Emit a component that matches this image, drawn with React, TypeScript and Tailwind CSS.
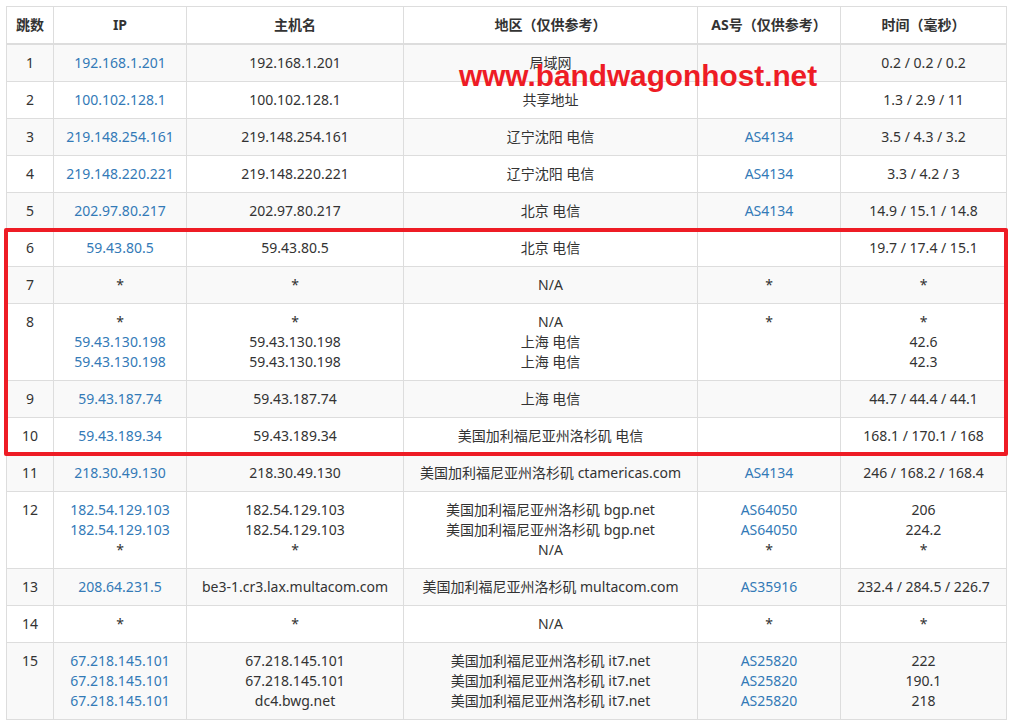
import React from "react";

type Row = {
  hop: string;
  ip: string[];
  host: string[];
  region: string[];
  as: string[];
  time: string[];
};

const rows: Row[] = [
  { hop: "1", ip: ["192.168.1.201"], host: ["192.168.1.201"], region: ["局域网"], as: [""], time: ["0.2 / 0.2 / 0.2"] },
  { hop: "2", ip: ["100.102.128.1"], host: ["100.102.128.1"], region: ["共享地址"], as: [""], time: ["1.3 / 2.9 / 11"] },
  { hop: "3", ip: ["219.148.254.161"], host: ["219.148.254.161"], region: ["辽宁沈阳 电信"], as: ["AS4134"], time: ["3.5 / 4.3 / 3.2"] },
  { hop: "4", ip: ["219.148.220.221"], host: ["219.148.220.221"], region: ["辽宁沈阳 电信"], as: ["AS4134"], time: ["3.3 / 4.2 / 3"] },
  { hop: "5", ip: ["202.97.80.217"], host: ["202.97.80.217"], region: ["北京 电信"], as: ["AS4134"], time: ["14.9 / 15.1 / 14.8"] },
  { hop: "6", ip: ["59.43.80.5"], host: ["59.43.80.5"], region: ["北京 电信"], as: [""], time: ["19.7 / 17.4 / 15.1"] },
  { hop: "7", ip: ["*"], host: ["*"], region: ["N/A"], as: ["*"], time: ["*"] },
  {
    hop: "8",
    ip: ["*", "59.43.130.198", "59.43.130.198"],
    host: ["*", "59.43.130.198", "59.43.130.198"],
    region: ["N/A", "上海 电信", "上海 电信"],
    as: ["*", "", ""],
    time: ["*", "42.6", "42.3"],
  },
  { hop: "9", ip: ["59.43.187.74"], host: ["59.43.187.74"], region: ["上海 电信"], as: [""], time: ["44.7 / 44.4 / 44.1"] },
  { hop: "10", ip: ["59.43.189.34"], host: ["59.43.189.34"], region: ["美国加利福尼亚州洛杉矶 电信"], as: [""], time: ["168.1 / 170.1 / 168"] },
  { hop: "11", ip: ["218.30.49.130"], host: ["218.30.49.130"], region: ["美国加利福尼亚州洛杉矶 ctamericas.com"], as: ["AS4134"], time: ["246 / 168.2 / 168.4"] },
  {
    hop: "12",
    ip: ["182.54.129.103", "182.54.129.103", "*"],
    host: ["182.54.129.103", "182.54.129.103", "*"],
    region: ["美国加利福尼亚州洛杉矶 bgp.net", "美国加利福尼亚州洛杉矶 bgp.net", "N/A"],
    as: ["AS64050", "AS64050", "*"],
    time: ["206", "224.2", "*"],
  },
  { hop: "13", ip: ["208.64.231.5"], host: ["be3-1.cr3.lax.multacom.com"], region: ["美国加利福尼亚州洛杉矶 multacom.com"], as: ["AS35916"], time: ["232.4 / 284.5 / 226.7"] },
  { hop: "14", ip: ["*"], host: ["*"], region: ["N/A"], as: ["*"], time: ["*"] },
  {
    hop: "15",
    ip: ["67.218.145.101", "67.218.145.101", "67.218.145.101"],
    host: ["67.218.145.101", "67.218.145.101", "dc4.bwg.net"],
    region: ["美国加利福尼亚州洛杉矶 it7.net", "美国加利福尼亚州洛杉矶 it7.net", "美国加利福尼亚州洛杉矶 it7.net"],
    as: ["AS25820", "AS25820", "AS25820"],
    time: ["222", "190.1", "218"],
  },
];

function Lines({ items, link }: { items: string[]; link?: boolean }) {
  return (
    <>
      {items.map((t, i) => (
        <div
          key={i}
          className={
            "h-5 " + (link && t !== "*" ? "text-[#337ab7]" : "text-[#333333]")
          }
        >
          {t}
        </div>
      ))}
    </>
  );
}

const td = "border border-[#dddddd] px-2 py-2 text-center align-top leading-5";
const th = "border border-[#dddddd] border-b-2 px-2 py-2 text-center align-bottom leading-5 font-bold text-[#333333]";

export default function App() {
  return (
    <div
      className="relative bg-white w-[1013px] min-h-[723px] pl-[6px] pt-[6px] text-[14px] text-[#333333]"
      style={{ fontFamily: '"Noto Sans", "Noto Sans CJK SC", sans-serif' }}
    >
      <table className="w-[1000px] table-fixed border-collapse border border-[#dddddd]">
        <colgroup>
          <col className="w-[47px]" />
          <col className="w-[133px]" />
          <col className="w-[217px]" />
          <col className="w-[294px]" />
          <col className="w-[143px]" />
          <col className="w-[166px]" />
        </colgroup>
        <thead>
          <tr>
            <th className={th}>跳数</th>
            <th className={th}>IP</th>
            <th className={th}>主机名</th>
            <th className={th}>地区（仅供参考）</th>
            <th className={th}>AS号（仅供参考）</th>
            <th className={th}>时间（毫秒）</th>
          </tr>
        </thead>
        <tbody>
          {rows.map((r, i) => (
            <tr key={r.hop} className={i % 2 === 0 ? "bg-[#f9f9f9]" : "bg-white"}>
              <td className={td}>
                <div className="h-5">{r.hop}</div>
              </td>
              <td className={td}>
                <Lines items={r.ip} link />
              </td>
              <td className={td}>
                <Lines items={r.host} />
              </td>
              <td className={td}>
                <Lines items={r.region} />
              </td>
              <td className={td}>
                <Lines items={r.as} link />
              </td>
              <td className={td}>
                <Lines items={r.time} />
              </td>
            </tr>
          ))}
        </tbody>
      </table>

      <div
        className="absolute left-[459px] top-[61px] text-[29.8px] leading-none font-bold text-[#ee1c25] whitespace-nowrap"
        style={{ fontFamily: '"Liberation Sans", Arial, sans-serif' }}
      >
        www.bandwagonhost.net
      </div>

      <div className="absolute left-[4px] top-[228px] w-[1004px] h-[228px] border-4 border-[#ee1c25] rounded-[2px] pointer-events-none" />
    </div>
  );
}
